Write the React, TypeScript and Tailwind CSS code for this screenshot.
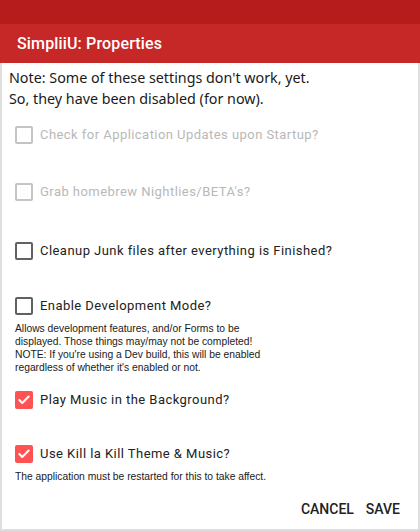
import { Check } from "lucide-react";

type Row = {
  label: string;
  checked?: boolean;
  disabled?: boolean;
  mt: string;
  note?: string[];
};

const rows: Row[] = [
  { label: "Check for Application Updates upon Startup?", disabled: true, mt: "mt-[17px]" },
  { label: "Grab homebrew Nightlies/BETA's?", disabled: true, mt: "mt-[39px]" },
  { label: "Cleanup Junk files after everything is Finished?", mt: "mt-[41px]" },
  {
    label: "Enable Development Mode?",
    mt: "mt-[37px]",
    note: [
      "Allows development features, and/or Forms to be",
      "displayed. Those things may/may not be completed!",
      "NOTE: If you're using a Dev build, this will be enabled",
      "regardless of whether it's enabled or not.",
    ],
  },
  { label: "Play Music in the Background?", checked: true, mt: "mt-[17px]" },
  {
    label: "Use Kill la Kill Theme & Music?",
    checked: true,
    mt: "mt-[36px]",
    note: ["The application must be restarted for this to take affect."],
  },
];

function Box({ checked, disabled }: { checked?: boolean; disabled?: boolean }) {
  if (checked) {
    return (
      <span className="flex h-[18px] w-[18px] shrink-0 items-center justify-center rounded-[2px] bg-[#ff5252]">
        <Check className="h-[14px] w-[14px] text-white" strokeWidth={3.5} />
      </span>
    );
  }
  return (
    <span
      className={`h-[18px] w-[18px] shrink-0 rounded-[2px] border-2 ${
        disabled ? "border-[#c4c4c4]" : "border-[#616161]"
      }`}
    />
  );
}

export default function App() {
  return (
    <div className="flex h-[531px] w-[420px] flex-col bg-white">
      <div className="h-[24px] bg-[#b71c1c]" />
      <div className="flex h-[39px] items-center bg-[#c62828] px-[17px] font-['Roboto'] text-[16px] font-medium tracking-[0.15px] text-white">
        SimpliiU: Properties
      </div>
      <div className="flex flex-1 flex-col border-x-2 border-b-2 border-[#dedede] pl-[13px] pr-[16px]">
        <div className="-ml-[6px] pt-[4px] font-['Noto_Sans'] text-[14.3px] leading-[21px] text-[#1a1a1a]">
          <p>Note: Some of these settings don't work, yet.</p>
          <p>So, they have been disabled (for now).</p>
        </div>
        {rows.map((r) => (
          <div key={r.label} className={r.mt}>
            <label className="flex h-[18px] items-center gap-[7px]">
              <Box checked={r.checked} disabled={r.disabled} />
              <span
                className={`font-['Roboto'] text-[13px] font-normal tracking-[0.45px] ${
                  r.disabled ? "text-[#b8b8b8]" : "text-[#222222]"
                }`}
              >
                {r.label}
              </span>
            </label>
            {r.note ? (
              <div className="mt-[7px] font-['Liberation_Sans'] text-[10.3px] leading-[13px] text-[#1a1a1a]">
                {r.note.map((l) => (
                  <p key={l}>{l}</p>
                ))}
              </div>
            ) : null}
          </div>
        ))}
        <div className="mt-auto mb-[10px] flex justify-end gap-[12px] pr-[2px] font-['Roboto'] text-[14px] font-medium text-[#222222]">
          <button className="h-[20px]">CANCEL</button>
          <button className="h-[20px]">SAVE</button>
        </div>
      </div>
    </div>
  );
}
